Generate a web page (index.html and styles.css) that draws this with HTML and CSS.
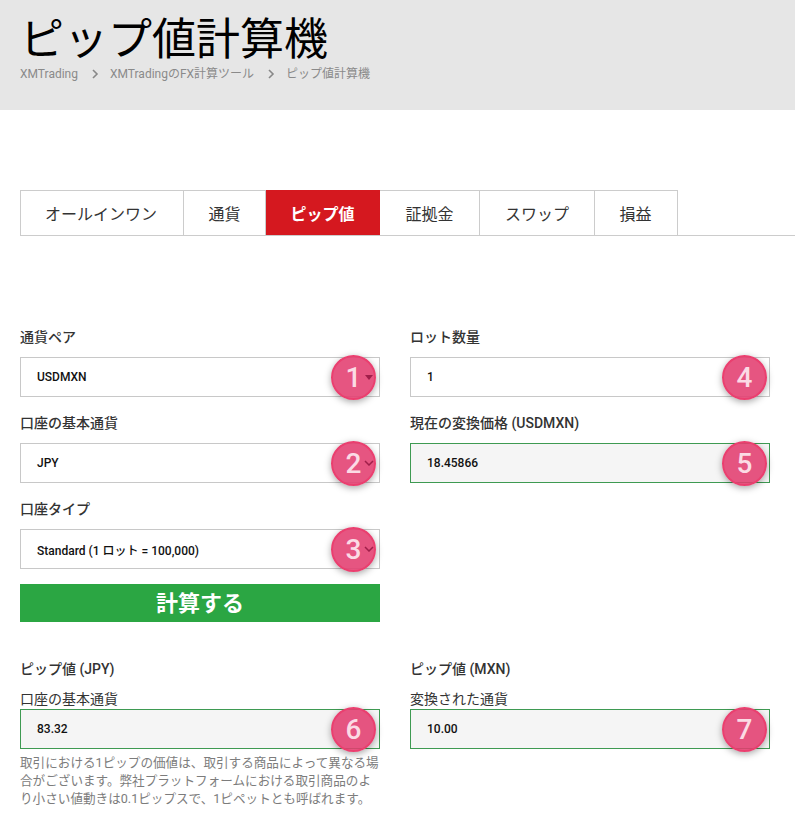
FILE: index.html
```html
<!DOCTYPE html>
<html lang="ja">
<head>
<meta charset="utf-8">
<title>ピップ値計算機</title>
<link rel="stylesheet" href="styles.css">
</head>
<body>
<header class="hero">
  <h1 class="hero-title">ピップ値計算機</h1>
  <nav class="crumbs">
    <span>XMTrading</span>
    <svg class="crumb-sep" width="8" height="10" viewBox="0 0 8 10"><path d="M2 1l4 4-4 4" fill="none" stroke="#888" stroke-width="1.6"/></svg>
    <span>XMTradingのFX計算ツール</span>
    <svg class="crumb-sep" width="8" height="10" viewBox="0 0 8 10"><path d="M2 1l4 4-4 4" fill="none" stroke="#888" stroke-width="1.6"/></svg>
    <span>ピップ値計算機</span>
  </nav>
</header>
<main class="content">
  <div class="tabs">
    <div class="tab tab-all">オールインワン</div>
    <div class="tab tab-cur">通貨</div>
    <div class="tab tab-active">ピップ値</div>
    <div class="tab tab-margin">証拠金</div>
    <div class="tab tab-swap">スワップ</div>
    <div class="tab tab-pl">損益</div>
  </div>
  <div class="form-grid">
    <div class="col">
      <label class="label">通貨ペア</label>
      <div class="field">USDMXN
        <span class="badge">1</span>
        <svg class="caret caret-solid" width="8" height="5" viewBox="0 0 8 5"><path d="M0 0h8L4 5z" fill="#a01f4a"/></svg>
      </div>
      <label class="label">口座の基本通貨</label>
      <div class="field">JPY
        <span class="badge">2</span>
        <svg class="caret" width="10" height="6" viewBox="0 0 10 6"><path d="M1 1l4 4 4-4" fill="none" stroke="#a01f4a" stroke-width="1.5"/></svg>
      </div>
      <label class="label">口座タイプ</label>
      <div class="field">Standard (1 ロット = 100,000)
        <span class="badge">3</span>
        <svg class="caret" width="10" height="6" viewBox="0 0 10 6"><path d="M1 1l4 4 4-4" fill="none" stroke="#a01f4a" stroke-width="1.5"/></svg>
      </div>
      <button class="calc" type="button">計算する</button>
    </div>
    <div class="col">
      <label class="label">ロット数量</label>
      <div class="field">1
        <span class="badge badge-right">4</span>
      </div>
      <label class="label">現在の変換価格 (USDMXN)</label>
      <div class="field field-output">18.45866
        <span class="badge badge-right">5</span>
      </div>
    </div>
    <div class="col col-result">
      <div class="label label-result">ピップ値 (JPY)</div>
      <div class="sublabel">口座の基本通貨</div>
      <div class="field field-output">83.32
        <span class="badge">6</span>
      </div>
      <p class="help">取引における1ピップの価値は、取引する商品によって異なる場合がございます。弊社プラットフォームにおける取引商品のより小さい値動きは0.1ピップスで、1ピペットとも呼ばれます。</p>
    </div>
    <div class="col col-result">
      <div class="label label-result">ピップ値 (MXN)</div>
      <div class="sublabel">変換された通貨</div>
      <div class="field field-output">10.00
        <span class="badge badge-right">7</span>
      </div>
    </div>
  </div>
</main>
</body>
</html>
```

FILE: styles.css
```css
* { box-sizing: border-box; }
html, body { margin: 0; padding: 0; }
body {
  background: #fff;
  color: #333;
  font-family: Roboto, "Noto Sans CJK JP", sans-serif;
  overflow: hidden;
}
.hero {
  height: 110px;
  background: #e6e6e6;
  padding: 14px 20px 0;
}
.hero-title {
  margin: 0;
  font-size: 44px;
  line-height: 52px;
  font-weight: 400;
  color: #000;
}
.crumbs {
  display: flex;
  align-items: center;
  font-size: 12px;
  line-height: 18px;
  color: #8a8a8a;
  margin-top: -1px;
}
.crumb-sep { margin: 0 11px 0 13px; }
.content { padding: 80px 25px 0 20px; }
.tabs {
  display: flex;
  height: 46px;
  border-bottom: 1px solid #ccc;
  margin-right: -25px;
}
.tab {
  display: flex;
  align-items: center;
  justify-content: center;
  height: 46px;
  font-size: 16px;
  color: #333;
  background: #fff;
  border: 1px solid #ccc;
  border-left: 0;
}
.tab-all { width: 164px; border-left: 1px solid #ccc; padding-right: 2px; }
.tab-cur { width: 82px; }
.tab-active {
  width: 114px;
  background: #d5181f;
  border-color: #d5181f;
  color: #fff;
  font-weight: 700;
  height: 45px;
}
.tab-margin { width: 100px; }
.tab-swap { width: 115px; }
.tab-pl { width: 83px; padding-right: 1px; }
.form-grid {
  display: grid;
  grid-template-columns: 360px 360px;
  column-gap: 30px;
  margin-top: 90px;
}
.col { display: flex; flex-direction: column; }
.label {
  display: block;
  height: 20px;
  line-height: 22px;
  margin-bottom: 11px;
  font-size: 14px;
  font-weight: 500;
  color: #333;
}
.field {
  position: relative;
  display: flex;
  align-items: center;
  height: 40px;
  margin-bottom: 15px;
  padding-left: 16px;
  border: 1px solid #c8c8c8;
  background: #fff;
  font-size: 12px;
  font-weight: 500;
  color: #111;
}
.field-output {
  border-color: #3e9a52;
  background: #f5f5f5;
}
.caret { position: absolute; right: 5px; top: 50%; margin-top: -3px; }
.caret-solid { right: 6px; margin-top: -2px; }
.badge {
  position: absolute;
  right: 3px;
  top: -3px;
  width: 45px;
  height: 45px;
  display: flex;
  align-items: center;
  justify-content: center;
  border-radius: 50%;
  border: 2px solid #ea3f6f;
  background: rgba(226, 62, 112, 0.88);
  box-shadow: 0 2px 7px rgba(0, 0, 0, 0.35);
  color: #fbdbe5;
  font-size: 28px;
  font-weight: 500;
}
.badge-right { right: 2px; }
.calc {
  display: block;
  width: 100%;
  height: 38px;
  margin: 0;
  padding: 0 0 5px;
  border: 0;
  background: #2ba643;
  color: #fff;
  font-family: inherit;
  font-size: 22px;
  font-weight: 700;
}
.col-result { margin-top: 36px; }
.label-result { margin-bottom: 11px; }
.sublabel {
  height: 20px;
  line-height: 20px;
  font-size: 14px;
  color: #333;
}
.col-result .field { margin-bottom: 5px; }
.help {
  margin: 0;
  font-size: 12.6px;
  line-height: 18px;
  color: #7c7c7c;
}
```
